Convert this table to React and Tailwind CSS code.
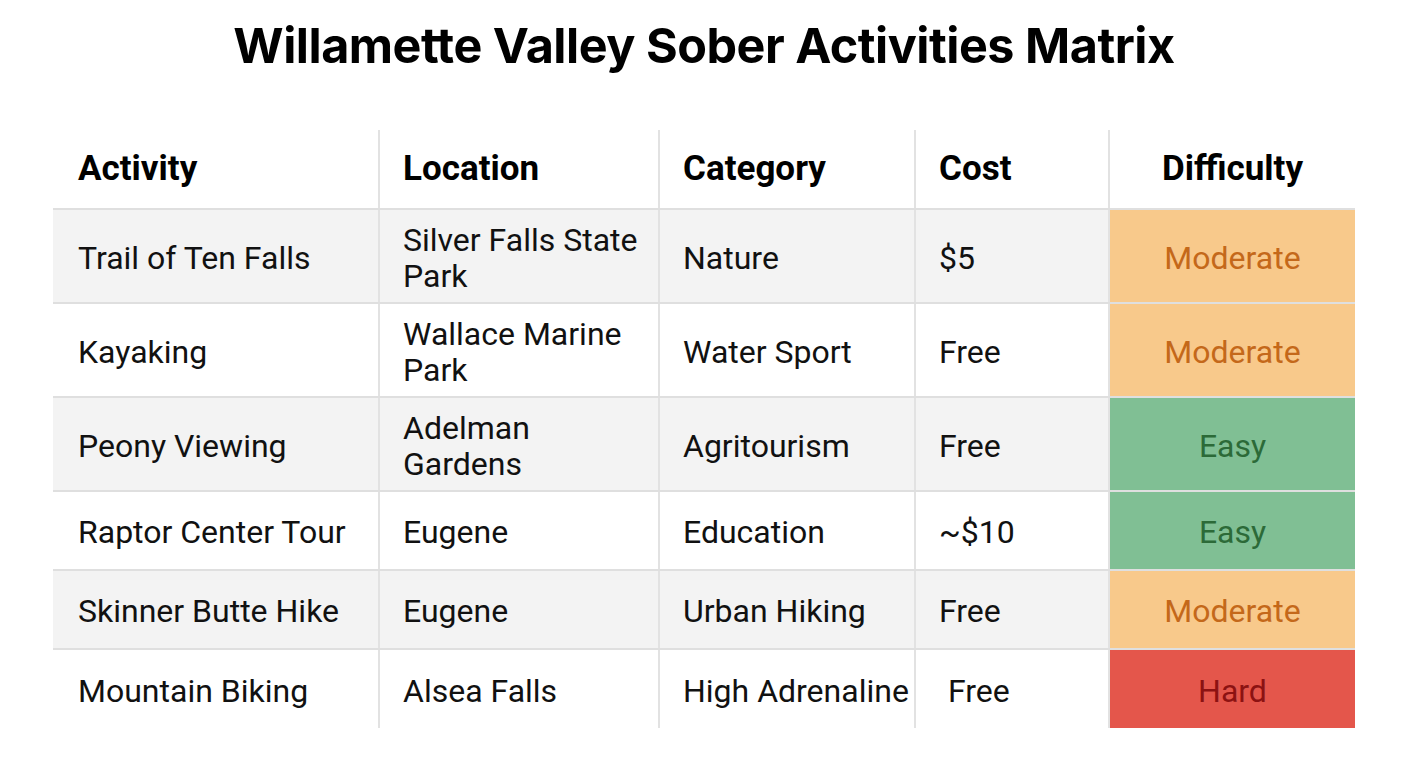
const rows = [
  { activity: 'Trail of Ten Falls', location: 'Silver Falls State Park', category: 'Nature', cost: '$5', level: 'Moderate', h: 'h-[94px]', shade: true },
  { activity: 'Kayaking', location: 'Wallace Marine Park', category: 'Water Sport', cost: 'Free', level: 'Moderate', h: 'h-[94px]' },
  { activity: 'Peony Viewing', location: 'Adelman Gardens', category: 'Agritourism', cost: 'Free', level: 'Easy', h: 'h-[94px]', shade: true },
  { activity: 'Raptor Center Tour', location: 'Eugene', category: 'Education', cost: '~$10', level: 'Easy', h: 'h-[79px]' },
  { activity: 'Skinner Butte Hike', location: 'Eugene', category: 'Urban Hiking', cost: 'Free', level: 'Moderate', h: 'h-[79px]', shade: true },
  { activity: 'Mountain Biking', location: 'Alsea Falls', category: 'High Adrenaline', cost: 'Free', level: 'Hard', h: 'h-[78px]', last: true },
]

const levelStyle = {
  Moderate: 'bg-[#f8c98b] text-[#c4681a]',
  Easy: 'bg-[#80bf94] text-[#2c6a38]',
  Hard: 'bg-[#e4564b] text-[#8c1212]',
}

const cols = 'grid grid-cols-[327px_280px_256px_194px_245px]'

export default function App() {
  return (
    <div className="w-[1408px] h-[768px] bg-white font-['Roboto',sans-serif] text-[#111]">
      <h1 className="pt-[15px] text-center font-['Inter',sans-serif] font-bold text-[48.5px] leading-[62px] tracking-[-0.01em] text-black">
        Willamette Valley Sober Activities Matrix
      </h1>

      <div className="ml-[53px] mt-[49px] w-[1302px]">
        {/* header */}
        <div className={`${cols} h-[84px] pt-[4px] border-b-2 border-[#dfdfdf] text-[35px] font-bold text-black`}>
          <div className="flex items-center pl-[25px] border-r-2 border-[#e2e2e2]">Activity</div>
          <div className="flex items-center pl-[23px] border-r-2 border-[#e2e2e2]">Location</div>
          <div className="flex items-center pl-[23px] border-r-2 border-[#e2e2e2]">Category</div>
          <div className="flex items-center pl-[23px] border-r-2 border-[#e2e2e2]">Cost</div>
          <div className="flex items-center justify-center">Difficulty</div>
        </div>

        {rows.map((r) => (
          <div
            key={r.activity}
            className={`${cols} ${r.h} ${r.last ? '' : 'border-b-2 border-[#dfdfdf]'} ${r.shade ? 'bg-[#f3f3f3]' : 'bg-white'} text-[32px] leading-[36px]`}
          >
            <div className="flex items-center pt-[3px] pl-[25px] border-r-2 border-[#e2e2e2]">{r.activity}</div>
            <div className="flex items-center pt-[3px] pl-[23px] pr-[10px] border-r-2 border-[#e2e2e2]">{r.location}</div>
            <div className="flex items-center pt-[3px] pl-[23px] border-r-2 border-[#e2e2e2] whitespace-nowrap">{r.category}</div>
            <div className={`flex items-center pt-[3px] ${r.last ? 'pl-[32px]' : 'pl-[23px]'} border-r-2 border-[#e2e2e2]`}>{r.cost}</div>
            <div className={`flex items-center justify-center pt-[3px] ${levelStyle[r.level]}`}>{r.level}</div>
          </div>
        ))}
      </div>
    </div>
  )
}
